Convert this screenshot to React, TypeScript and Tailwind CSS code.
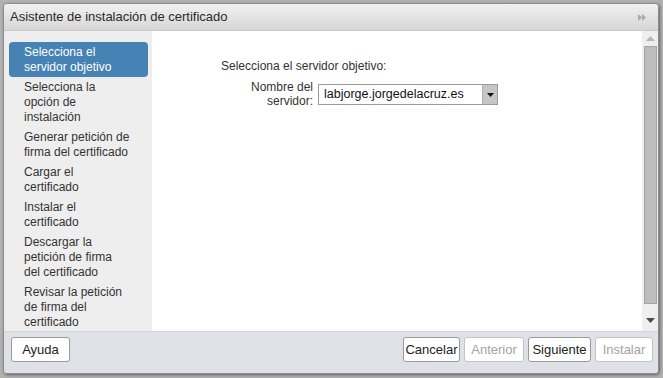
import { ReactNode } from 'react';

const steps: string[][] = [
  ['Selecciona el', 'servidor objetivo'],
  ['Selecciona la', 'opción de', 'instalación'],
  ['Generar petición de', 'firma del certificado'],
  ['Cargar el', 'certificado'],
  ['Instalar el', 'certificado'],
  ['Descargar la', 'petición de firma', 'del certificado'],
  ['Revisar la petición', 'de firma del', 'certificado'],
];

function FooterButton({ children, disabled, w }: { children: ReactNode; disabled?: boolean; w: string }) {
  return (
    <button
      className={`${w} h-[25px] rounded-[3px] bg-white text-[13px] leading-none ${
        disabled ? 'border border-[#c4c4c4] text-[#a3a3a3]' : 'border border-[#9a9a9a] text-[#222]'
      }`}
    >
      {children}
    </button>
  );
}

export default function App() {
  return (
    <div className="w-[663px] h-[378px] bg-[#b1b1b1] pt-[3px] pl-[3px] pr-[4px] pb-[4px] font-['Liberation_Sans',Arial,sans-serif]">
      <div className="h-[371px] flex flex-col rounded-[4px] overflow-hidden border border-[#8c8c8c] shadow-[1px_1px_3px_rgba(0,0,0,0.45)]">
        {/* Title bar */}
        <div className="h-[27px] shrink-0 flex items-center justify-between pl-[6px] pr-[12px] bg-gradient-to-b from-[#f1f1f1] to-[#d6d6d6] border-b border-[#c8c8c8]">
          <span className="text-[13px] text-[#2a2a2a]">Asistente de instalación de certificado</span>
          <svg width="8" height="7" viewBox="0 0 8 7" className="text-[#a9a9a9]">
            <path d="M0 0 L4 3.5 L0 7 Z M4 0 L8 3.5 L4 7 Z" fill="currentColor" />
          </svg>
        </div>

        {/* Body */}
        <div className="h-[300px] shrink-0 flex">
          {/* Steps */}
          <div className="w-[148px] shrink-0 bg-[#eeeeee] pt-[11px] pl-[5px] pr-[4px]">
            {steps.map((lines, i) => (
              <div
                key={i}
                className={`pl-[15px] pr-[8px] pt-[3px] pb-[2px] text-[12px] leading-[15px] rounded-[4px] ${
                  i === 0 ? 'bg-[#4682b4] text-white' : 'text-[#333]'
                }`}
              >
                {lines.map((l, j) => (
                  <div key={j} className="whitespace-nowrap">{l}</div>
                ))}
              </div>
            ))}
          </div>

          {/* Content */}
          <div className="flex-1 bg-white pt-[28px] pl-[69px]">
            <div className="text-[12px] leading-[15px] text-[#333]">Selecciona el servidor objetivo:</div>
            <div className="flex items-start mt-[6px] ml-[24px]">
              <div className="w-[68px] text-right text-[12px] leading-[14px] text-[#333]">
                <div>Nombre del</div>
                <div>servidor:</div>
              </div>
              <div className="ml-[5px] mt-[4px] w-[180px] h-[21px] flex border border-[#9b9b9b] bg-white">
                <div className="flex-1 flex items-center pl-[5px] text-[12.5px] text-[#111]">labjorge.jorgedelacruz.es</div>
                <div className="w-[15px] flex items-center justify-center bg-[#c6c6c6] border-l border-[#b0b0b0]">
                  <svg width="7" height="4" viewBox="0 0 7 4">
                    <path d="M0 0 L7 0 L3.5 4 Z" fill="#111" />
                  </svg>
                </div>
              </div>
            </div>
          </div>

          {/* Scrollbar */}
          <div className="w-[16px] shrink-0 bg-[#efefef] flex flex-col items-center">
            <svg width="9" height="5" viewBox="0 0 9 5" className="mt-[5px]">
              <path d="M0 5 L4.5 0 L9 5 Z" fill="#b5b5b5" />
            </svg>
            <div className="mt-[5px] w-[13px] h-[258px] bg-[#bdbdbd] border border-[#a5a5a5]" />
            <svg width="9" height="5" viewBox="0 0 9 5" className="mt-[14px]">
              <path d="M0 0 L9 0 L4.5 5 Z" fill="#4d4d4d" />
            </svg>
          </div>
        </div>

        {/* Footer */}
        <div className="flex-1 bg-[#dee2e7] flex items-start justify-between pt-[5px] pl-[7px] pr-[5px] border-t border-[#d2d6db]">
          <FooterButton w="w-[59px]">Ayuda</FooterButton>
          <div className="flex gap-[4px]">
            <FooterButton w="w-[57px]">Cancelar</FooterButton>
            <FooterButton w="w-[60px]" disabled>Anterior</FooterButton>
            <FooterButton w="w-[63px]">Siguiente</FooterButton>
            <FooterButton w="w-[58px]" disabled>Instalar</FooterButton>
          </div>
        </div>
      </div>
    </div>
  );
}
